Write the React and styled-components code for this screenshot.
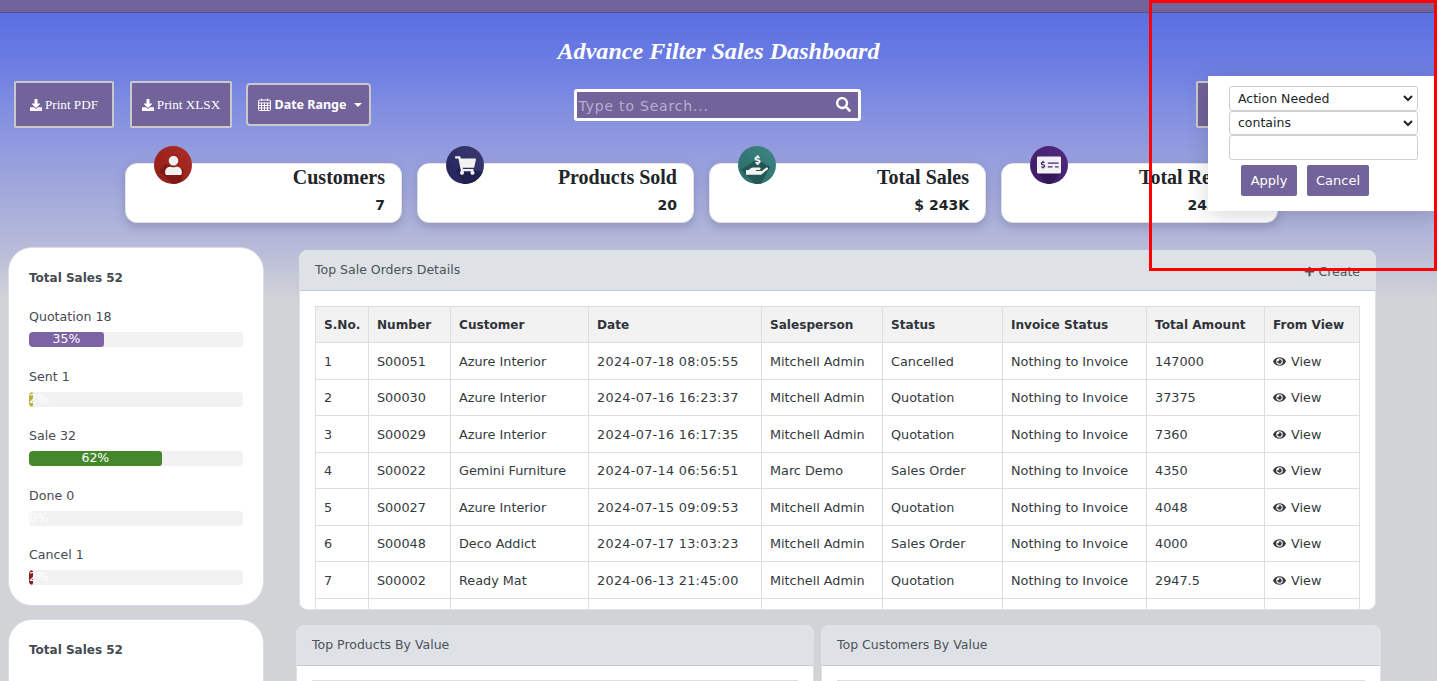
import React from 'react';
import styled, { createGlobalStyle } from 'styled-components';
import { FaDownload, FaSearch, FaEye, FaPlus, FaUser, FaShoppingCart, FaHandHoldingUsd, FaMoneyCheckAlt } from 'react-icons/fa';

const UI = '"DejaVu Sans", "Noto Sans", sans-serif';
const SERIF = '"Liberation Serif", serif';

const Global = createGlobalStyle`
  html, body { margin: 0; padding: 0; height: 100%; overflow: hidden; }
  body { font-family: ${UI}; color: #343a40; }
  * { box-sizing: border-box; }
`;

const Page = styled.div`
  position: relative;
  height: 681px;
  overflow: hidden;
  background: linear-gradient(#5a6fe3 13px, #6e7fe2 70px, #8b95df 130px, #b4b8d9 240px, #d1d3d6 300px);
`;
const TopBar = styled.div`
  height: 13px;
  background: #72639a;
  border-bottom: 1px solid #5c5180;
`;
const Title = styled.h1`
  margin: 0;
  padding-top: 24px;
  height: 68px;
  text-align: center;
  font: italic bold 24.1px/28px ${SERIF};
  color: #fff;
`;
const Toolbar = styled.div`
  display: grid;
  grid-template-columns: 1fr auto 1fr;
  align-items: center;
  height: 47px;
  padding: 0 16px 0 13px;
`;
const ToolGroup = styled.div`
  display: flex;
  align-items: center;
  gap: 16px;
  padding-left: 1px;
`;
const PrintButton = styled.button`
  height: 47px;
  width: ${p => p.$w}px;
  display: flex;
  align-items: center;
  justify-content: center;
  gap: 3px;
  padding: 0;
  background: #72639a;
  border: 2px solid #c9c9c9;
  border-radius: 2px;
  color: #fff;
  font: 13.2px ${SERIF};
  svg { width: 12px; height: 12px; }
`;
const DateButton = styled.button`
  height: 43px;
  width: 125px;
  margin-left: -2px;
  display: flex;
  align-items: center;
  justify-content: center;
  gap: 4px;
  padding: 0 0 0 3px;
  background: #72639a;
  border: 2px solid #c9c9c9;
  border-radius: 4px;
  color: #fff;
  font: bold 12.5px "Noto Sans", sans-serif;
`;
const Caret = styled.span`
  width: 0;
  height: 0;
  margin-left: 4px;
  border-left: 4px solid transparent;
  border-right: 4px solid transparent;
  border-top: 4px solid #fff;
`;
const Search = styled.div`
  width: 287px;
  height: 32px;
  display: flex;
  align-items: center;
  justify-content: space-between;
  padding: 0 5px 0 2px;
  background: #72639a;
  border: 3px solid #fff;
  border-radius: 3px;
  color: #fff;
  svg { width: 15px; height: 15px; margin-right: 2px; }
`;
const SearchText = styled.span`
  margin-top: 2px;
  font: 14px ${UI};
  letter-spacing: 0.8px;
  color: #b8aed0;
`;
const RightTools = styled.div`
  display: flex;
  justify-content: flex-end;
  padding-right: 145px;
`;
const Cards = styled.div`
  display: flex;
  gap: 15px;
  padding: 35px 0 0 125px;
`;
const Card = styled.div`
  position: relative;
  width: 277px;
  height: 60px;
  padding: 2px 16px 0;
  background: #fff;
  border: 1px solid #e4e4e8;
  border-radius: 12px;
  box-shadow: 0 4px 10px rgba(60, 60, 90, 0.25);
  text-align: right;
`;
const CardTitle = styled.div`
  font: bold 20px/23px ${SERIF};
  color: #212529;
`;
const CardValue = styled.div`
  margin-top: 7px;
  font: bold 14px/18px ${UI};
  color: #212529;
`;
const Badge = styled.div`
  position: absolute;
  left: 28px;
  top: -18px;
  width: 38px;
  height: 38px;
  border-radius: 50%;
  overflow: hidden;
  display: flex;
  align-items: center;
  justify-content: center;
  background: linear-gradient(45deg, ${p => p.$from}, ${p => p.$to});
  color: #f2f2f2;
  &::before {
    content: '';
    position: absolute;
    inset: 0;
    background: ${p => p.$shade};
    clip-path: polygon(${p => p.$cut});
  }
  svg { position: relative; }
`;
const Main = styled.div`
  display: flex;
  align-items: flex-start;
  padding: 24px 0 0 8px;
`;
const Side = styled.div`
  width: 256px;
  flex: none;
  display: flex;
  flex-direction: column;
  gap: 13px;
`;
const SideCard = styled.div`
  height: ${p => p.$h}px;
  padding: 21px 20px 0;
  background: #fff;
  border: 1px solid #dcdde2;
  border-radius: 24px;
`;
const SideTitle = styled.div`
  font: bold 12px/18px ${UI};
  color: #454b52;
  margin-bottom: 21px;
`;
const Label = styled.div`
  font: 12.6px/18px ${UI};
  color: #454b52;
  margin-bottom: 6px;
`;
const Track = styled.div`
  position: relative;
  height: 15px;
  margin-bottom: 20.5px;
  background: #f2f2f2;
  border-radius: 4px;
  overflow: hidden;
`;
const Fill = styled.div`
  height: 100%;
  background: ${p => p.$color};
  border-radius: 3px;
`;
const Percent = styled.span`
  position: absolute;
  left: 0;
  top: 0;
  font: 12.5px/14px ${UI};
  color: #fff;
  text-align: center;
`;
const Content = styled.div`
  flex: 1;
  padding: 3px 0 0 35px;
`;
const Panel = styled.div`
  background: #fff;
  border-radius: 8px;
  overflow: hidden;
  border: 1px solid #dfe1e6;
`;
const OrdersPanel = styled(Panel)`
  width: 1077px;
  margin-bottom: 15px;
`;
const PanelHead = styled.div`
  height: 40px;
  display: flex;
  align-items: center;
  justify-content: space-between;
  padding: 0 15px 3px;
  background: #dee1e6;
  border-bottom: 1px solid #c6c9cf;
  font: 12.5px ${UI};
  color: #4c5259;
`;
const Create = styled.span`
  display: flex;
  align-items: center;
  gap: 3px;
  margin-top: 4px;
  svg { width: 11px; height: 11px; }
`;
const TableWrap = styled.div`
  height: 318px;
  padding: 15px 15px 0;
  overflow: hidden;
`;
const Table = styled.table`
  width: 1044px;
  table-layout: fixed;
  border-collapse: collapse;
  font: 12.8px ${UI};
  color: #343a40;
`;
const Th = styled.th`
  height: 36px;
  padding: 0 8px;
  text-align: left;
  background: #f2f2f2;
  border: 1px solid #dedede;
  font-weight: bold;
  font-size: 12.1px;
  color: #30343a;
`;
const Td = styled.td`
  height: 36.5px;
  padding: 1px 8px 0;
  border: 1px solid #dedede;
  white-space: nowrap;
`;
const DateCell = styled(Td)`
  letter-spacing: 0.3px;
`;
const ViewCell = styled.span`
  display: flex;
  align-items: center;
  gap: 5px;
  svg { width: 13px; height: 13px; }
`;
const BottomRow = styled.div`
  display: flex;
  gap: 7px;
  margin-left: -3px;
`;
const SmallPanel = styled(Panel)`
  width: ${p => p.$w}px;
  height: 90px;
`;
const InnerLine = styled.div`
  height: 1px;
  margin: 14px 15px 0;
  background: #dedede;
`;
const Popup = styled.div`
  position: absolute;
  left: 1208px;
  top: 76px;
  width: 229px;
  height: 135px;
  padding: 10px 19px 0 21px;
  background: #fff;
  box-shadow: 0 4px 22px rgba(0, 0, 0, 0.16);
`;
const FilterBox = styled.div`
  height: 24.5px;
  display: flex;
  align-items: center;
  justify-content: space-between;
  padding: 0 4px 0 8px;
  background: #fff;
  border: 1px solid #cfcfcf;
  border-radius: 3px;
  font: 12.5px ${UI};
  color: #212529;
`;
const Actions = styled.div`
  display: flex;
  gap: 10px;
  margin: 5px 0 0 12px;
`;
const ActionButton = styled.button`
  height: 31px;
  width: ${p => p.$w}px;
  padding: 0;
  background: #72639a;
  border: none;
  border-radius: 2px;
  color: #fff;
  font: 13px ${UI};
`;
const Annotation = styled.div`
  position: absolute;
  left: 1149px;
  top: 0;
  width: 288px;
  height: 271px;
  border: 3px solid #f00;
  pointer-events: none;
`;

const Calendar = () => (
  <svg width="13" height="13" viewBox="0 0 13 13" fill="none" stroke="#fff" strokeWidth="1">
    <rect x="0.5" y="2" width="12" height="10.5" rx="1" />
    <path d="M.5 5h12M.5 7.5h12M.5 10h12M3.5 5v7.5M6.5 5v7.5M9.5 5v7.5M3.5 .5v2.5M9.5 .5v2.5" />
  </svg>
);
const Chevron = () => (
  <svg width="10" height="8" viewBox="0 0 10 8" fill="none" stroke="#222" strokeWidth="2">
    <path d="M1 2l4 4 4-4" />
  </svg>
);

const bars = [
  { name: 'Quotation 18', pct: 35, color: '#7c64a4' },
  { name: 'Sent 1', pct: 2, color: '#c0ae3a' },
  { name: 'Sale 32', pct: 62, color: '#45882b' },
  { name: 'Done 0', pct: 0, color: '#888' },
  { name: 'Cancel 1', pct: 2, color: '#8a1c14' },
];
const stats = [
  { title: 'Customers', value: '7', from: '#8f1f18', to: '#ad2c25', shade: '#7d1a14', cut: '30% 48%, 78% 62%, 72% 92%, 62% 100%, 50% 100%, 14% 66%', icon: <FaUser size={19} /> },
  { title: 'Products Sold', value: '20', from: '#23225a', to: '#3c3a70', shade: '#21214f', cut: '25% 60%, 80% 65%, 100% 70%, 70% 100%, 45% 100%', icon: <FaShoppingCart size={21} /> },
  { title: 'Total Sales', value: '$ 243K', from: '#2a6a68', to: '#3d8782', shade: '#225755', cut: '50% 35%, 85% 55%, 60% 100%, 45% 100%, 8% 62%', icon: <FaHandHoldingUsd size={22} /> },
  { title: 'Total Revenue', value: '243267.5', from: '#3c1a66', to: '#522a80', shade: '#341758', cut: '20% 70%, 85% 65%, 55% 100%, 45% 100%', icon: <FaMoneyCheckAlt size={24} /> },
];
const columns = [53, 82, 138, 173, 121, 120, 144, 118, 95];
const heads = ['S.No.', 'Number', 'Customer', 'Date', 'Salesperson', 'Status', 'Invoice Status', 'Total Amount', 'From View'];
const rows = [
  ['1', 'S00051', 'Azure Interior', '2024-07-18 08:05:55', 'Mitchell Admin', 'Cancelled', '147000'],
  ['2', 'S00030', 'Azure Interior', '2024-07-16 16:23:37', 'Mitchell Admin', 'Quotation', '37375'],
  ['3', 'S00029', 'Azure Interior', '2024-07-16 16:17:35', 'Mitchell Admin', 'Quotation', '7360'],
  ['4', 'S00022', 'Gemini Furniture', '2024-07-14 06:56:51', 'Marc Demo', 'Sales Order', '4350'],
  ['5', 'S00027', 'Azure Interior', '2024-07-15 09:09:53', 'Mitchell Admin', 'Quotation', '4048'],
  ['6', 'S00048', 'Deco Addict', '2024-07-17 13:03:23', 'Mitchell Admin', 'Sales Order', '4000'],
  ['7', 'S00002', 'Ready Mat', '2024-06-13 21:45:00', 'Mitchell Admin', 'Quotation', '2947.5'],
];

export default function App() {
  return (
    <Page>
      <Global />
      <TopBar />
      <Title>Advance Filter Sales Dashboard</Title>
      <Toolbar>
        <ToolGroup>
          <PrintButton $w={100}><FaDownload />Print PDF</PrintButton>
          <PrintButton $w={102}><FaDownload />Print XLSX</PrintButton>
          <DateButton><Calendar />Date Range<Caret /></DateButton>
        </ToolGroup>
        <Search><SearchText>Type to Search...</SearchText><FaSearch /></Search>
        <RightTools><PrintButton $w={80} /></RightTools>
      </Toolbar>
      <Cards>
        {stats.map(s => (
          <Card key={s.title}>
            <Badge $from={s.from} $to={s.to} $shade={s.shade} $cut={s.cut}>{s.icon}</Badge>
            <CardTitle>{s.title}</CardTitle>
            <CardValue>{s.value}</CardValue>
          </Card>
        ))}
      </Cards>
      <Main>
        <Side>
          <SideCard $h={359}>
            <SideTitle>Total Sales 52</SideTitle>
            {bars.map(b => (
              <div key={b.name}>
                <Label>{b.name}</Label>
                <Track>
                  <Fill $color={b.color} style={{ width: `${b.pct}%` }} />
                  <Percent style={{ width: `${Math.max(b.pct, 8)}%` }}>{b.pct}%</Percent>
                </Track>
              </div>
            ))}
          </SideCard>
          <SideCard $h={200}>
            <SideTitle>Total Sales 52</SideTitle>
          </SideCard>
        </Side>
        <Content>
          <OrdersPanel>
            <PanelHead>Top Sale Orders Details<Create><FaPlus />Create</Create></PanelHead>
            <TableWrap>
              <Table>
                <colgroup>{columns.map((c, i) => <col key={i} style={{ width: c }} />)}</colgroup>
                <thead><tr>{heads.map(h => <Th key={h}>{h}</Th>)}</tr></thead>
                <tbody>
                  {rows.map(r => (
                    <tr key={r[0]}>
                      <Td>{r[0]}</Td><Td>{r[1]}</Td><Td>{r[2]}</Td><DateCell>{r[3]}</DateCell><Td>{r[4]}</Td><Td>{r[5]}</Td>
                      <Td>Nothing to Invoice</Td><Td>{r[6]}</Td>
                      <Td><ViewCell><FaEye />View</ViewCell></Td>
                    </tr>
                  ))}
                  <tr>{columns.map((c, i) => <Td key={i} />)}</tr>
                </tbody>
              </Table>
            </TableWrap>
          </OrdersPanel>
          <BottomRow>
            <SmallPanel $w={518}><PanelHead>Top Products By Value</PanelHead><InnerLine /></SmallPanel>
            <SmallPanel $w={560}><PanelHead>Top Customers By Value</PanelHead><InnerLine /></SmallPanel>
          </BottomRow>
        </Content>
      </Main>
      <Popup>
        <FilterBox>Action Needed<Chevron /></FilterBox>
        <FilterBox>contains<Chevron /></FilterBox>
        <FilterBox />
        <Actions>
          <ActionButton $w={56}>Apply</ActionButton>
          <ActionButton $w={62}>Cancel</ActionButton>
        </Actions>
      </Popup>
      <Annotation />
    </Page>
  );
}
